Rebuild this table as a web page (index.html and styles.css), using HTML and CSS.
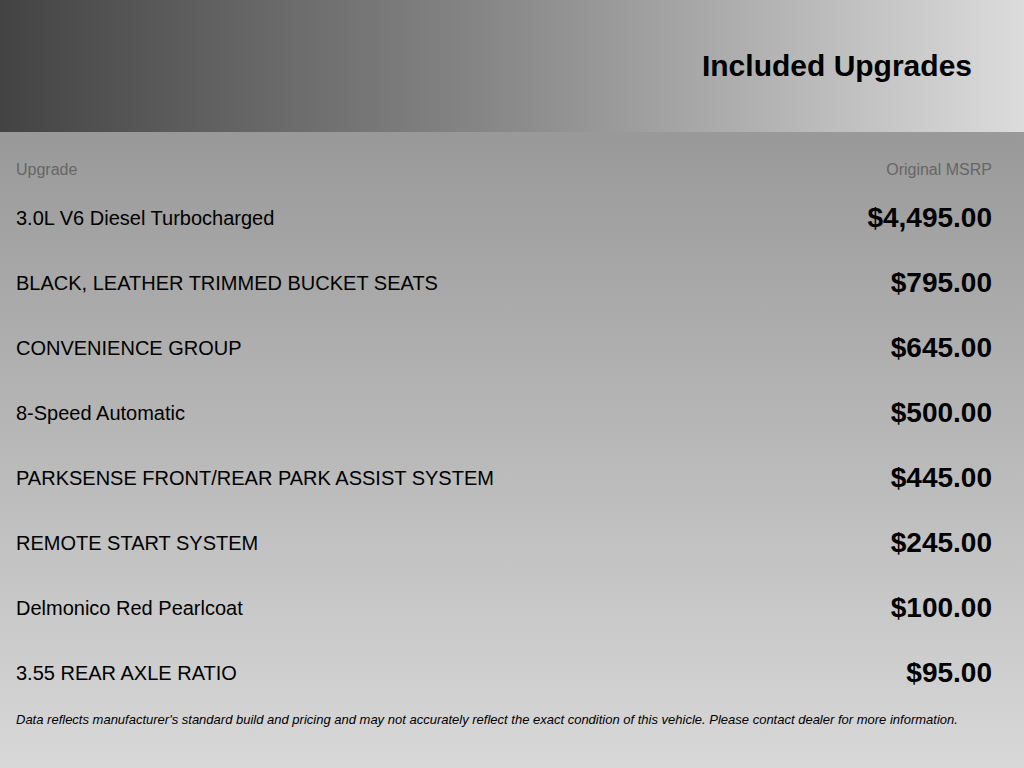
FILE: index.html
```html
<!DOCTYPE html>
<html lang="en">
<head>
<meta charset="utf-8">
<title>Included Upgrades</title>
<link rel="stylesheet" href="styles.css">
</head>
<body>
<header class="banner">
  <h1 class="banner-title">Included Upgrades</h1>
</header>
<main class="content">
  <div class="table-head">
    <span>Upgrade</span>
    <span>Original MSRP</span>
  </div>
  <ul class="rows">
    <li class="row"><span class="name">3.0L V6 Diesel Turbocharged</span><span class="price">$4,495.00</span></li>
    <li class="row"><span class="name">BLACK, LEATHER TRIMMED BUCKET SEATS</span><span class="price">$795.00</span></li>
    <li class="row"><span class="name">CONVENIENCE GROUP</span><span class="price">$645.00</span></li>
    <li class="row"><span class="name">8-Speed Automatic</span><span class="price">$500.00</span></li>
    <li class="row"><span class="name">PARKSENSE FRONT/REAR PARK ASSIST SYSTEM</span><span class="price">$445.00</span></li>
    <li class="row"><span class="name">REMOTE START SYSTEM</span><span class="price">$245.00</span></li>
    <li class="row"><span class="name">Delmonico Red Pearlcoat</span><span class="price">$100.00</span></li>
    <li class="row"><span class="name">3.55 REAR AXLE RATIO</span><span class="price">$95.00</span></li>
  </ul>
  <p class="note">Data reflects manufacturer's standard build and pricing and may not accurately reflect the exact condition of this vehicle. Please contact dealer for more information.</p>
</main>
</body>
</html>
```

FILE: styles.css
```css
html, body {
  margin: 0;
  padding: 0;
}
body {
  width: 1024px;
  height: 768px;
  overflow: hidden;
  font-family: "Liberation Sans", Arial, sans-serif;
  color: #000;
  background: #d8d8d8;
  display: flex;
  flex-direction: column;
}
.banner {
  height: 132px;
  flex: none;
  background: linear-gradient(to right, #434343 0%, #8a8a8a 50%, #dcdcdc 100%);
  display: flex;
  align-items: center;
  justify-content: flex-end;
  padding-right: 52px;
  box-sizing: border-box;
}
.banner-title {
  margin: 0;
  font-size: 30px;
  font-weight: bold;
  line-height: 32px;
}
.content {
  flex: 1;
  background: linear-gradient(to bottom, #999999 0%, #d8d8d8 100%);
  padding: 0 32px 0 16px;
}
.table-head {
  display: flex;
  justify-content: space-between;
  padding: 28px 0 6px;
  font-size: 16px;
  line-height: 20px;
  color: #666;
}
.rows {
  list-style: none;
  margin: 0;
  padding: 0;
}
.row {
  height: 65px;
  display: flex;
  align-items: center;
  justify-content: space-between;
}
.name {
  font-size: 20px;
}
.price {
  font-size: 28px;
  font-weight: bold;
  margin-top: -2px;
}
.note {
  margin: 6px 0 0;
  font-size: 13px;
  line-height: 16px;
  font-style: italic;
}
```
